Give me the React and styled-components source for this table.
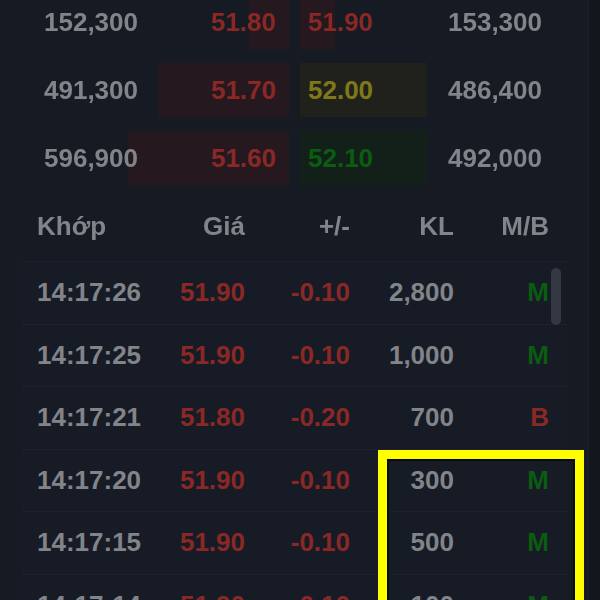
import React from "react";
import styled, { createGlobalStyle, css } from "styled-components";

const COLORS = {
  bg: "#161a23",
  panel: "#171b25",
  line: "#1c212b",
  text: "#818489",
  red: "#8a2826",
  green: "#0a5c11",
  yellow: "#7f7819",
  barRed: "#25181e",
  barYellow: "#21211c",
  barGreen: "#132019",
  side: "#13161d",
};

const GlobalStyle = createGlobalStyle`
  html, body {
    margin: 0;
    padding: 0;
    background: ${COLORS.bg};
    overflow: hidden;
  }
  body {
    font-family: "Liberation Sans", Arial, sans-serif;
    font-weight: bold;
    font-size: 26px;
    color: ${COLORS.text};
  }
`;

const book = [
  { bidVol: "152,300", bid: "51.80", bidW: 40, ask: "51.90", tone: "red", askW: 35, askVol: "153,300" },
  { bidVol: "491,300", bid: "51.70", bidW: 131, ask: "52.00", tone: "yellow", askW: 127, askVol: "486,400" },
  { bidVol: "596,900", bid: "51.60", bidW: 161, ask: "52.10", tone: "green", askW: 127, askVol: "492,000" },
];

const trades = [
  ["14:17:26", "51.90", "-0.10", "2,800", "M"],
  ["14:17:25", "51.90", "-0.10", "1,000", "M"],
  ["14:17:21", "51.80", "-0.20", "700", "B"],
  ["14:17:20", "51.90", "-0.10", "300", "M"],
  ["14:17:15", "51.90", "-0.10", "500", "M"],
  ["14:17:14", "51.90", "-0.10", "100", "M"],
];

const toneText = { red: COLORS.red, yellow: COLORS.yellow, green: COLORS.green };
const toneBar = { red: COLORS.barRed, yellow: COLORS.barYellow, green: COLORS.barGreen };

function App() {
  return (
    <Screen>
      <GlobalStyle />
      <Main>
        <Book>
          {book.map((r) => (
            <BookRow key={r.bidVol}>
              <Vol>{r.bidVol}</Vol>
              <BidCell>
                <Bar $side="bid" $tone="red" style={{ width: r.bidW }} />
                <Price $tone="red">{r.bid}</Price>
              </BidCell>
              <AskCell>
                <Bar $side="ask" $tone={r.tone} style={{ width: r.askW }} />
                <Price $tone={r.tone}>{r.ask}</Price>
              </AskCell>
              <Vol>{r.askVol}</Vol>
            </BookRow>
          ))}
        </Book>

        <Header>
          <HeadCell $left>Khớp</HeadCell>
          <HeadCell>Giá</HeadCell>
          <HeadCell>+/-</HeadCell>
          <HeadCell>KL</HeadCell>
          <HeadCell>M/B</HeadCell>
        </Header>

        <TradeList>
          <Thumb />
          {trades.map((t) => (
            <TradeRow key={t[0]}>
              <Cell $left>{t[0]}</Cell>
              <Cell $color={COLORS.red}>{t[1]}</Cell>
              <Cell $color={COLORS.red}>{t[2]}</Cell>
              <Cell>{t[3]}</Cell>
              <Cell $color={t[4] === "M" ? COLORS.green : COLORS.red}>{t[4]}</Cell>
            </TradeRow>
          ))}
        </TradeList>
      </Main>
      <Side />
      <Highlight />
    </Screen>
  );
}

const Screen = styled.div`
  position: relative;
  display: flex;
  align-items: flex-start;
  width: 600px;
  height: 600px;
  overflow: hidden;
`;

const Main = styled.div`
  width: 588px;
  flex-shrink: 0;
  filter: blur(0.5px);
`;

const Side = styled.div`
  flex: 1;
  align-self: stretch;
  background: ${COLORS.side};
  border-left: 1px solid #1d212a;
`;

const Book = styled.div`
  margin-top: -12px;
`;

const BookRow = styled.div`
  display: grid;
  grid-template-columns: 138px 151px 140px 113px;
  height: 68px;
  align-items: stretch;
`;

const Vol = styled.div`
  position: relative;
  z-index: 1;
  display: flex;
  align-items: center;
  justify-content: flex-end;
`;

const BidCell = styled.div`
  position: relative;
  display: flex;
  align-items: center;
  justify-content: flex-end;
  padding-right: 13px;
`;

const AskCell = styled.div`
  position: relative;
  display: flex;
  align-items: center;
  margin-left: 11px;
  padding-left: 8px;
`;

const Bar = styled.span`
  position: absolute;
  top: 7px;
  bottom: 7px;
  ${(p) => (p.$side === "bid" ? "right: 0;" : "left: 0;")}
  background: ${(p) => toneBar[p.$tone]};
`;

const Price = styled.span`
  position: relative;
  color: ${(p) => toneText[p.$tone]};
`;

const columns = css`
  display: grid;
  grid-template-columns: 103px 105px 105px 104px 95px;
  align-items: center;
`;

const Header = styled.div`
  ${columns};
  height: 70px;
  margin: 0 21px 0 22px;
  padding-left: 15px;
  box-sizing: border-box;
  border-bottom: 1px solid ${COLORS.line};
`;

const HeadCell = styled.div`
  text-align: ${(p) => (p.$left ? "left" : "right")};
`;

const TradeList = styled.div`
  position: relative;
  margin: 0 21px 0 22px;
  background: ${COLORS.panel};
`;

const TradeRow = styled.div`
  ${columns};
  height: 62.5px;
  box-sizing: border-box;
  padding-left: 15px;
  border-bottom: 1px solid ${COLORS.line};
`;

const Cell = styled.div`
  text-align: ${(p) => (p.$left ? "left" : "right")};
  color: ${(p) => p.$color || COLORS.text};
`;

const Thumb = styled.div`
  position: absolute;
  left: 529px;
  top: 6px;
  width: 10px;
  height: 57px;
  border-radius: 5px;
  background: #333843;
`;

const Highlight = styled.div`
  position: absolute;
  left: 378px;
  top: 450px;
  width: 206px;
  height: 200px;
  box-sizing: border-box;
  border: 9px solid #ffff00;
  box-shadow: inset 0 0 0 2px #0a0b0d;
`;

export default App;
